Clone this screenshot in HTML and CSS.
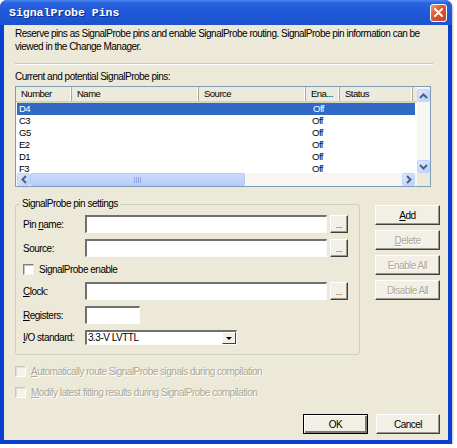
FILE: index.html
```html
<!DOCTYPE html>
<html>
<head>
  <meta charset="utf-8">
  <link rel="stylesheet" href="styles.css">
</head>
<body>
  <div class="window">
    <div class="titlebar">
      <span class="title">SignalProbe Pins</span>
      <span class="close">
        <svg width="9" height="9" viewBox="0 0 9 9"><path d="M1 1 L8 8 M8 1 L1 8" stroke="#fff" stroke-width="2" stroke-linecap="round"/></svg>
      </span>
    </div>
    <div class="content">
      <p class="intro">Reserve pins as SignalProbe pins and enable SignalProbe routing. SignalProbe pin information can be<br>viewed in the Change Manager.</p>
      <div class="sep"></div>
      <div class="caption">Current and potential SignalProbe pins:</div>

      <div class="listview">
        <div class="lv-head">
          <div class="th">Number</div>
          <div class="th">Name</div>
          <div class="th">Source</div>
          <div class="th">Ena...</div>
          <div class="th">Status</div>
          <div class="th">I</div>
        </div>
        <div class="vscroll">
          <div class="sb-btn"><svg width="9" height="6" viewBox="0 0 9 6"><path d="M1 5 L4.5 1.5 L8 5" fill="none" stroke="#4d6185" stroke-width="2"/></svg></div>
          <div class="sb-track"></div>
          <div class="sb-btn"><svg width="9" height="6" viewBox="0 0 9 6"><path d="M1 1 L4.5 4.5 L8 1" fill="none" stroke="#4d6185" stroke-width="2"/></svg></div>
        </div>
        <div class="lv-rows">
          <div class="row selected"><span>D4</span><span></span><span></span><span class="ena">Off</span><span></span><span></span></div>
          <div class="row"><span>C3</span><span></span><span></span><span class="ena">Off</span><span></span><span></span></div>
          <div class="row"><span>G5</span><span></span><span></span><span class="ena">Off</span><span></span><span></span></div>
          <div class="row"><span>E2</span><span></span><span></span><span class="ena">Off</span><span></span><span></span></div>
          <div class="row"><span>D1</span><span></span><span></span><span class="ena">Off</span><span></span><span></span></div>
          <div class="row"><span>F3</span><span></span><span></span><span class="ena">Off</span><span></span><span></span></div>
        </div>
        <div class="hscroll">
          <div class="sb-btn"><svg width="6" height="9" viewBox="0 0 6 9"><path d="M5 1 L1.5 4.5 L5 8" fill="none" stroke="#4d6185" stroke-width="2"/></svg></div>
          <div class="sb-thumb"><span class="grip"></span></div>
          <div class="sb-track"></div>
          <div class="sb-btn"><svg width="6" height="9" viewBox="0 0 6 9"><path d="M1 1 L4.5 4.5 L1 8" fill="none" stroke="#4d6185" stroke-width="2"/></svg></div>
        </div>
        <div class="corner"></div>
      </div>

      <div class="middle">
        <fieldset class="group">
          <legend>SignalProbe pin settings</legend>
          <div class="form">
            <label class="lbl">Pin <u>n</u>ame:</label>
            <div class="field"></div>
            <button class="browse">...</button>

            <label class="lbl">Source:</label>
            <div class="field"></div>
            <button class="browse">...</button>

            <label class="check-row"><span class="checkbox"></span>SignalProbe enable</label>

            <label class="lbl"><u>C</u>lock:</label>
            <div class="field"></div>
            <button class="browse">...</button>

            <label class="lbl"><u>R</u>egisters:</label>
            <div class="field short"></div>
            <span></span>

            <label class="lbl"><u>I</u>/O standard:</label>
            <div class="combo"><span class="combo-text">3.3-V LVTTL</span><span class="drop"><i></i></span></div>
            <span></span>
          </div>
        </fieldset>
        <div class="side-buttons">
          <button class="btn"><u>A</u>dd</button>
          <button class="btn disabled"><u>D</u>elete</button>
          <button class="btn disabled">Enable All</button>
          <button class="btn disabled">Disable All</button>
        </div>
      </div>

      <div class="options">
        <label class="option"><span class="checkbox off"></span><u>A</u>utomatically route SignalProbe signals during compilation</label>
        <label class="option"><span class="checkbox off"></span><u>M</u>odify latest fitting results during SignalProbe compilation</label>
      </div>

      <div class="footer">
        <button class="btn default">OK</button>
        <button class="btn">Cancel</button>
      </div>
    </div>
  </div>
</body>
</html>
```

FILE: styles.css
```css
* {
  box-sizing: border-box;
}
body {
  margin: 0;
  background: #fff;
  font-family: "Liberation Sans", Arial, sans-serif;
  font-size: 9.5px;
  letter-spacing: -0.5px;
  color: #000;
}
u {
  text-decoration: underline;
}
.window {
  width: 452px;
  height: 444px;
  display: flex;
  flex-direction: column;
  background: #0b3fd0;
  border-radius: 7px 7px 0 0;
  box-shadow: 1px 1px 2px rgba(0,0,0,0.25);
  overflow: hidden;
}
.titlebar {
  height: 25px;
  flex-shrink: 0;
  display: flex;
  align-items: center;
  justify-content: space-between;
  padding: 0 5px 0 9px;
  background: linear-gradient(#4b8af5 0, #2a62e0 3px, #1f58d8 50%, #1d52cf 100%);
}
.title {
  font-family: "Liberation Mono", monospace;
  font-weight: bold;
  font-size: 11.5px;
  letter-spacing: 0;
  color: #fff;
  text-shadow: 1px 1px 0 #0c2d8a;
}
.close {
  width: 17px;
  height: 18px;
  display: flex;
  align-items: center;
  justify-content: center;
  border: 1px solid #fff;
  border-radius: 3px;
  background: linear-gradient(135deg, #f09a7c 0, #dc5a34 40%, #c8451f 100%);
}
.content {
  flex: 1;
  margin: 0 4px 4px 4px;
  padding: 2px 8px 6px 11px;
  background: #ece9d8;
  display: flex;
  flex-direction: column;
}
.intro {
  margin: 0;
  line-height: 13px;
  font-size: 10px;
  white-space: nowrap;
}
.sep {
  margin: 10px 7px 0 0;
  border-top: 1px solid #cac7b7;
  border-bottom: 1px solid #fff;
}
.caption {
  margin-top: 5px;
  line-height: 13px;
  font-size: 10px;
}

/* list view */
.listview {
  margin-top: 3px;
  width: 416px;
  height: 101px;
  border: 1px solid #7f9db9;
  background: #fff;
  display: grid;
  grid-template-columns: 1fr 13px;
  grid-template-rows: 16px 1fr 13px;
  overflow: hidden;
}
.lv-head,
.row {
  display: grid;
  grid-template-columns: 56px 127px 107px 34px 73px 1fr;
}
.lv-head {
  grid-column: 1;
  grid-row: 1;
  background: #ebeadb;
  border-bottom: 2px solid #d6d2c2;
  overflow: hidden;
}
.th {
  padding-left: 5px;
  line-height: 14px;
  white-space: nowrap;
  border-right: 1px solid #aca899;
  box-shadow: inset -1px 0 #fff;
  overflow: hidden;
}
.lv-rows {
  grid-column: 1;
  grid-row: 2;
  overflow: hidden;
}
.row {
  height: 12px;
  line-height: 12px;
  margin-right: 2px;
}
.row span:first-child {
  padding-left: 3px;
}
.row .ena {
  padding-left: 6px;
}
.row.selected {
  background: #316ac5;
  color: #fff;
  margin-left: 1px;
}
.row.selected span:first-child {
  padding-left: 2px;
}
.vscroll {
  grid-column: 2;
  grid-row: 1 / 3;
  display: flex;
  flex-direction: column;
  background: #f7f6f1;
  padding-top: 2px;
}
.hscroll {
  grid-column: 1;
  grid-row: 3;
  display: flex;
  background: #f7f6f1;
  padding-left: 1px;
  padding-right: 2px;
}
.corner {
  grid-column: 2;
  grid-row: 3;
  background: #ece9d8;
}
.sb-btn {
  width: 13px;
  height: 13px;
  flex-shrink: 0;
  display: flex;
  align-items: center;
  justify-content: center;
  background: linear-gradient(135deg, #dde7fd, #bccffa);
  border: 1px solid #c3d3fd;
  border-radius: 2px;
}
.sb-track {
  flex: 1;
}
.sb-thumb {
  width: 215px;
  flex-shrink: 0;
  display: flex;
  align-items: center;
  justify-content: center;
  background: linear-gradient(#cbdafc, #b9cdf9);
  border: 1px solid #b4c8f6;
  border-radius: 2px;
}
.grip {
  width: 7px;
  height: 6px;
  background: repeating-linear-gradient(90deg, #8ea8e6 0 1px, transparent 1px 2px);
}

/* settings */
.middle {
  margin-top: 11px;
  display: flex;
  align-items: flex-start;
}
.group {
  width: 345px;
  margin: 0;
  padding: 5px 11px 9px 7px;
  border: 1px solid #d0d0bf;
  border-radius: 3px;
}
.group legend {
  padding: 0 2px;
  margin-left: -3px;
  line-height: 12px;
  font-size: 10px;
}
.form {
  display: grid;
  grid-template-columns: 59px 242px 18px;
  grid-template-rows: 18px 18px 13px 18px 18px 15px;
  column-gap: 3px;
  row-gap: 6px;
  align-items: center;
  font-size: 10px;
}
.lbl {
  white-space: nowrap;
}
.field {
  height: 18px;
  background: #fff;
  border-top: 2px solid #6f6f6f;
  border-left: 2px solid #6f6f6f;
  border-right: 1px solid #fbfbf8;
  border-bottom: 1px solid #fbfbf8;
}
.field.short {
  width: 55px;
}
.browse,
.btn {
  font-family: inherit;
  font-size: 10px;
  letter-spacing: inherit;
  color: #000;
  padding: 0;
  background: #f1efe6;
  border: 1px solid;
  border-color: #fff #404040 #404040 #fff;
  box-shadow: inset -1px -1px #9a978a;
  border-radius: 0;
}
.browse {
  width: 18px;
  height: 18px;
  font-size: 8px;
  letter-spacing: 0;
  line-height: 10px;
  padding-top: 3px;
}
.check-row {
  grid-column: 1 / -1;
  display: flex;
  align-items: center;
}
.checkbox {
  width: 11px;
  height: 11px;
  margin-right: 5px;
  flex-shrink: 0;
  background: #fff;
  border: 1px solid;
  border-color: #808080 #f4f3ee #f4f3ee #808080;
  box-shadow: inset 1px 1px #c9c6b8;
}
.combo {
  width: 152px;
  height: 15px;
  display: flex;
  align-items: center;
  background: #fff;
  border-top: 2px solid #6f6f6f;
  border-left: 2px solid #6f6f6f;
  border-right: 1px solid #fbfbf8;
  border-bottom: 1px solid #fbfbf8;
}
.combo-text {
  flex: 1;
  padding-left: 1px;
  line-height: 12px;
}
.drop {
  width: 14px;
  height: 12px;
  display: flex;
  align-items: center;
  justify-content: center;
  background: #f1efe6;
  border: 1px solid;
  border-color: #fff #404040 #404040 #fff;
}
.drop i {
  border-left: 3px solid transparent;
  border-right: 3px solid transparent;
  border-top: 3px solid #000;
}
.side-buttons {
  margin-left: 15px;
  padding-top: 7px;
  display: flex;
  flex-direction: column;
  gap: 5px;
}
.btn {
  width: 65px;
  height: 20px;
}
.btn.disabled {
  color: #aca899;
  text-shadow: 1px 1px 0 #fff;
}
.btn.default {
  border-color: #000;
  box-shadow: inset 1px 1px #fff, inset -2px -2px #7c7a6f;
}

/* options & footer */
.options {
  margin-top: 11px;
  display: flex;
  flex-direction: column;
  gap: 10px;
  font-size: 10px;
}
.option {
  display: flex;
  align-items: center;
  height: 11px;
  color: #aca899;
  text-shadow: 1px 1px 0 #fff;
}
.checkbox.off {
  background: #f4f3ee;
  border-color: #cac8bb #fff #fff #cac8bb;
  box-shadow: inset 1px 1px #e2e0d4;
}
.footer {
  margin-top: auto;
  display: flex;
  justify-content: flex-end;
  gap: 8px;
}
.footer .btn:last-child {
  width: 64px;
}
```
